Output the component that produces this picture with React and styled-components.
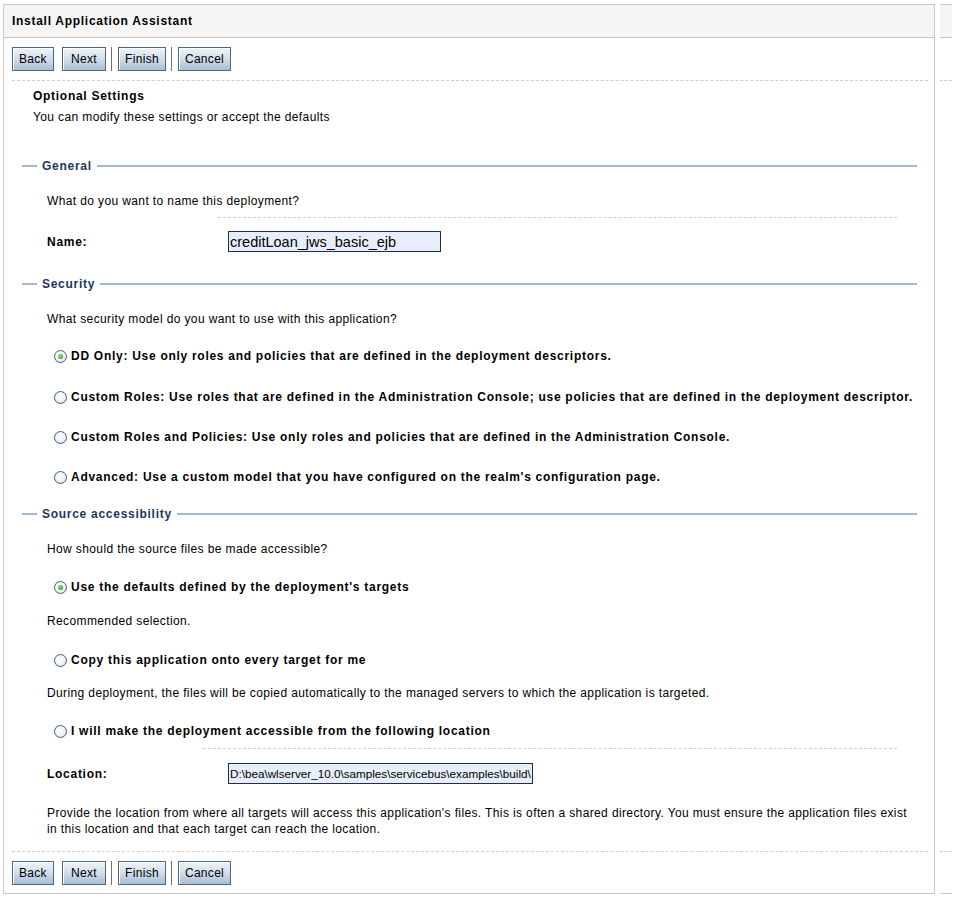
import React from 'react';
import styled, { createGlobalStyle } from 'styled-components';

const GlobalStyle = createGlobalStyle`
  body {
    margin: 0;
    background: #fff;
    font-family: "Liberation Sans", Arial, sans-serif;
    font-size: 12px;
    letter-spacing: 0.38px;
    color: #000;
  }
`;

const Page = styled.div`
  display: flex;
  align-items: stretch;
  padding-top: 4px;
  padding-left: 3px;
`;

const Panel = styled.div`
  width: 930px;
  border: 1px solid #c8c8c8;
  display: flex;
  flex-direction: column;
`;

const Sliver = styled.div`
  width: 12px;
  margin-left: 5px;
  display: flex;
  flex-direction: column;
  border-top: 1px solid #c8c8c8;
  border-bottom: 1px solid #c8c8c8;
`;

const SliverHead = styled.div`
  height: 32px;
  background: #f5f5f5;
  border-bottom: 1px solid #c8c8c8;
`;

const SliverGap = styled.div`
  height: ${p => p.h}px;
  border-bottom: 1px dashed #cfcfcf;
`;

const SliverFill = styled.div`
  flex: 1;
  border-bottom: 1px dashed #cfcfcf;
`;

const SliverFoot = styled.div`
  height: 41px;
`;

const Header = styled.div`
  height: 32px;
  background: #f5f5f5;
  border-bottom: 1px solid #c8c8c8;
  display: flex;
  align-items: center;
  padding-left: 8px;
  font-weight: bold;
  letter-spacing: 0.72px;
`;

const Toolbar = styled.div`
  display: flex;
  align-items: center;
  padding: 9px 0 ${p => p.bottom ? 8 : 9}px 0;
  margin: 0 6px 0 8px;
  border-top: ${p => p.bottom ? '1px dashed #cfcfcf' : 'none'};
  border-bottom: ${p => p.bottom ? 'none' : '1px dashed #cfcfcf'};
`;

const Button = styled.button`
  box-sizing: border-box;
  width: ${p => p.w}px;
  height: 24px;
  padding: 0;
  margin-right: ${p => p.last ? 0 : 8}px;
  font-family: "Liberation Sans", Arial, sans-serif;
  font-size: 12px;
  letter-spacing: 0.3px;
  color: #000;
  border: 1px solid #4d6787;
  background: linear-gradient(#eef3f9 0%, #d5e0ec 45%, #a9bdd4 100%);
  box-shadow: inset 1px 1px 0 #fff;
  cursor: pointer;
`;

const Separator = styled.span`
  width: 1px;
  height: 24px;
  background: #6f6f6f;
  margin: 0 6px 0 -3px;
`;

const Content = styled.div`
  margin: 0 6px 0 8px;
  padding-bottom: 14px;
`;

const Intro = styled.div`
  padding-left: 21px;
  padding-top: 7px;
`;

const Title = styled.div`
  font-weight: bold;
  line-height: 16px;
  letter-spacing: 0.72px;
`;

const Line = styled.div`
  line-height: 16px;
  margin-top: ${p => p.mt || 0}px;
`;

const Fieldset = styled.div`
  margin: ${p => p.mt}px 11px 0 10px;
`;

const Legend = styled.div`
  display: flex;
  align-items: center;
  line-height: 16px;
  font-weight: bold;
  letter-spacing: 0.72px;
  color: #1b3763;
  &::before {
    content: '';
    width: 15px;
    height: 2px;
    background: #a2b9d3;
    margin-right: 5px;
  }
  &::after {
    content: '';
    flex: 1;
    height: 2px;
    background: #a2b9d3;
    margin-left: 5px;
  }
`;

const Body = styled.div`
  padding-left: 25px;
`;

const FieldRow = styled.div`
  margin-top: ${p => p.mt}px;
  margin-left: ${p => p.dash}px;
  margin-right: 20px;
  border-top: 1px dashed #cfcfcf;
  padding-top: ${p => p.pt}px;
  display: flex;
  align-items: center;
`;

const Label = styled.div`
  width: 181px;
  margin-left: -${p => p.dash}px;
  font-weight: bold;
  letter-spacing: 0.72px;
  flex: none;
`;

const Input = styled.input`
  box-sizing: border-box;
  width: ${p => p.w}px;
  height: 21px;
  border: 1px solid #1c2f4f;
  background: #e8eef9;
  font-family: "Liberation Sans", Arial, sans-serif;
  font-size: ${p => p.fs}px;
  letter-spacing: 0;
  padding: 0 1px;
  color: #000;
  outline: none;
`;

const RadioRow = styled.label`
  display: flex;
  align-items: center;
  margin-top: ${p => p.mt}px;
  margin-left: 7px;
  line-height: 16px;
  font-weight: bold;
  letter-spacing: 0.72px;
  white-space: nowrap;
`;

const Radio = styled.span`
  box-sizing: border-box;
  width: 13px;
  height: 13px;
  border-radius: 50%;
  border: 1px solid #3d5f8c;
  background: radial-gradient(circle at 40% 40%, #ffffff 0%, #eef1f4 55%, #cdd3da 100%);
  margin-right: 4px;
  display: flex;
  align-items: center;
  justify-content: center;
  flex: none;
  &::after {
    content: '';
    display: ${p => p.checked ? 'block' : 'none'};
    width: 5px;
    height: 5px;
    border-radius: 50%;
    background: radial-gradient(circle at 40% 40%, #9be38f 0%, #2fa82a 70%, #1c7d1a 100%);
  }
`;

const Para = styled.div`
  margin-top: 21px;
  line-height: 16px;
`;

function Buttons({ bottom }) {
  return (
    <Toolbar bottom={bottom}>
      <Button w={42}>Back</Button>
      <Button w={44}>Next</Button>
      <Separator />
      <Button w={48}>Finish</Button>
      <Separator />
      <Button w={53} last>Cancel</Button>
    </Toolbar>
  );
}

function Option({ mt, checked, children }) {
  return (
    <RadioRow mt={mt}>
      <Radio checked={checked} />
      {children}
    </RadioRow>
  );
}

export default function App() {
  return (
    <>
      <GlobalStyle />
      <Page>
        <Panel>
          <Header>Install Application Assistant</Header>
          <Buttons />
          <Content>
            <Intro>
              <Title>Optional Settings</Title>
              <Line mt={5}>You can modify these settings or accept the defaults</Line>
            </Intro>

            <Fieldset mt={33}>
              <Legend>General</Legend>
              <Body>
                <Line mt={19}>What do you want to name this deployment?</Line>
                <FieldRow mt={8} dash={171} pt={13}>
                  <Label dash={171}>Name:</Label>
                  <Input w={213} fs={14.5} readOnly defaultValue="creditLoan_jws_basic_ejb" />
                </FieldRow>
              </Body>
            </Fieldset>

            <Fieldset mt={24}>
              <Legend>Security</Legend>
              <Body>
                <Line mt={19}>What security model do you want to use with this application?</Line>
                <Option mt={21} checked>DD Only: Use only roles and policies that are defined in the deployment descriptors.</Option>
                <Option mt={25}>Custom Roles: Use roles that are defined in the Administration Console; use policies that are defined in the deployment descriptor.</Option>
                <Option mt={24}>Custom Roles and Policies: Use only roles and policies that are defined in the Administration Console.</Option>
                <Option mt={24}>Advanced: Use a custom model that you have configured on the realm's configuration page.</Option>
              </Body>
            </Fieldset>

            <Fieldset mt={21}>
              <Legend>Source accessibility</Legend>
              <Body>
                <Line mt={19}>How should the source files be made accessible?</Line>
                <Option mt={22} checked>Use the defaults defined by the deployment's targets</Option>
                <Line mt={18}>Recommended selection.</Line>
                <Option mt={23}>Copy this application onto every target for me</Option>
                <Line mt={17}>During deployment, the files will be copied automatically to the managed servers to which the application is targeted.</Line>
                <Option mt={22}>I will make the deployment accessible from the following location</Option>
                <FieldRow mt={9} dash={156} pt={14}>
                  <Label dash={156}>Location:</Label>
                  <Input w={305} fs={11.7} readOnly defaultValue="D:\bea\wlserver_10.0\samples\servicebus\examples\build\" />
                </FieldRow>
                <Para>
                  Provide the location from where all targets will access this application's files. This is often a shared directory. You must ensure the application files exist in this location and that each target can reach the location.
                </Para>
              </Body>
            </Fieldset>
          </Content>
          <Buttons bottom />
        </Panel>
        <Sliver>
          <SliverHead />
          <SliverGap h={42} />
          <SliverFill />
          <SliverFoot />
        </Sliver>
      </Page>
    </>
  );
}
